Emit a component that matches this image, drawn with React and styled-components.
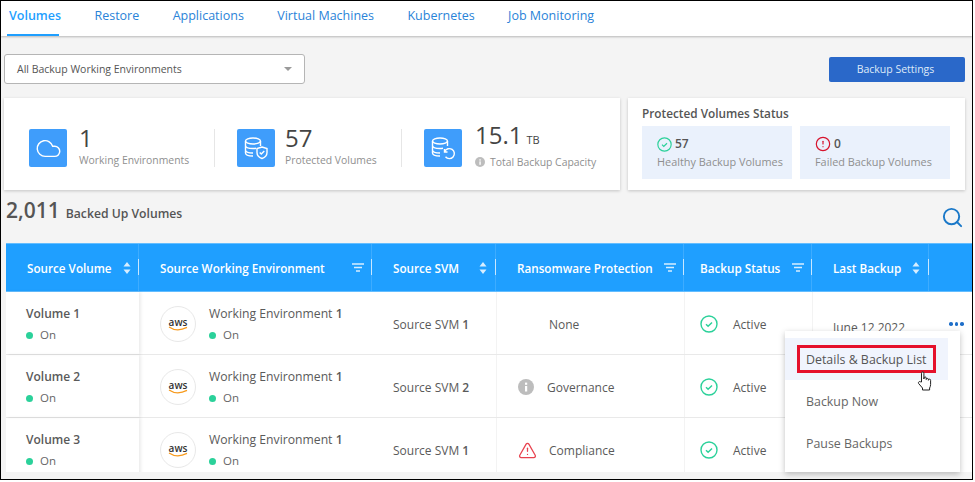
import React from "react";
import styled, { createGlobalStyle } from "styled-components";
import { Cloud, Search, CircleAlert, TriangleAlert } from "lucide-react";

const GlobalStyle = createGlobalStyle`
  html, body { margin: 0; padding: 0; background: #fff; }
  * { box-sizing: border-box; }
`;

const blue = "#1f9fff";
const text = "#5a5a5a";
const muted = "#8f8f8f";
const green = "#2bd19a";

const Frame = styled.div`
  position: relative;
  width: 973px;
  height: 480px;
  border: 1px solid #000;
  overflow: hidden;
  background: #f4f4f4;
  font-family: "Open Sans", "Liberation Sans", sans-serif;
  color: ${text};
`;

const TabBar = styled.nav`
  display: flex;
  height: 35px;
  padding-left: 8px;
  gap: 33.4px;
  background: #fff;
  box-shadow: 0 1px 2px rgba(0, 0, 0, 0.25);
`;

const Tab = styled.a`
  position: relative;
  height: 35px;
  padding-top: 6px;
  font-size: 12.5px;
  line-height: 17px;
  color: ${(p) => (p.$active ? blue : "#2a83d8")};
  font-weight: ${(p) => (p.$active ? 600 : 400)};

  &::after {
    content: "";
    display: ${(p) => (p.$active ? "block" : "none")};
    position: absolute;
    left: -2px;
    right: 2px;
    bottom: 0;
    height: 2px;
    background: ${blue};
  }
`;

const Toolbar = styled.div`
  display: flex;
  justify-content: space-between;
  align-items: center;
  padding: 18px 7px 0 3px;
`;

const Select = styled.div`
  display: flex;
  align-items: center;
  justify-content: space-between;
  width: 301px;
  height: 30px;
  padding: 0 12px;
  background: #fff;
  border: 1px solid #b5b5b5;
  border-radius: 3px;
  font-size: 10.5px;
  color: #555;
`;

const Caret = styled.span`
  width: 0;
  height: 0;
  border: 4px solid transparent;
  border-top: 4px solid #9a9a9a;
  border-bottom: 0;
`;

const SettingsButton = styled.button`
  width: 136px;
  height: 25px;
  padding: 0 3px 0 0;
  border: 0;
  border-radius: 2px;
  background: #2a68c9;
  color: #dfeaf8;
  font: 400 10.5px "Open Sans", sans-serif;
`;

const SummaryRow = styled.div`
  display: flex;
  gap: 8px;
  padding: 14px 7px 0 3px;
`;

const Card = styled.section`
  background: #fff;
  height: 92px;
  box-shadow: 0 1px 3px rgba(0, 0, 0, 0.2);
`;

const TotalsCard = styled(Card)`
  display: flex;
  align-items: center;
  width: 616px;
  padding: 8px 0 0 25px;
`;

const Stat = styled.div`
  display: flex;
  align-items: center;
  width: ${(p) => p.$width}px;
  gap: ${(p) => p.$gap}px;
`;

const IconTile = styled.div`
  display: flex;
  align-items: center;
  justify-content: center;
  width: 38px;
  height: 38px;
  border-radius: 2px;
  background: #3f9dfb;
  color: #fff;
`;

const StatText = styled.div`
  display: flex;
  flex-direction: column;
`;

const StatValue = styled.div`
  font-size: 24px;
  line-height: 26px;
  color: #444;
  margin-top: -5px;

  small {
    font-size: 11px;
    margin-left: 4px;
  }
`;

const StatLabel = styled.div`
  display: flex;
  align-items: center;
  gap: 5px;
  font-size: 10.4px;
  line-height: 14px;
  margin-top: 2px;
  color: ${muted};
  white-space: nowrap;
`;

const Divider = styled.div`
  width: 1px;
  height: 38px;
  margin-right: 22px;
  background: #e6e6e6;
`;

const StatusCard = styled(Card)`
  width: 337px;
  padding: 8px 15px 0 14px;
`;

const StatusTitle = styled.h3`
  margin: 0 0 5px;
  font-size: 11.8px;
  line-height: 15px;
  font-weight: 600;
  color: #555;
  white-space: nowrap;
`;

const StatusTiles = styled.div`
  display: flex;
  gap: 8px;
`;

const StatusTile = styled.div`
  width: 150px;
  height: 53px;
  padding: 10px 0 0 15px;
  background: #eaf1fc;
`;

const StatusCount = styled.div`
  display: flex;
  align-items: center;
  gap: 3px;
  font-size: 12px;
  line-height: 16px;
  font-weight: 600;
  color: #555;
`;

const StatusLabel = styled.div`
  margin-top: 3px;
  font-size: 10.9px;
  line-height: 14px;
  color: ${muted};
  white-space: nowrap;
`;

const TableHeading = styled.div`
  display: flex;
  justify-content: space-between;
  align-items: center;
  height: 44px;
  padding: 0 8px 0 5px;
  margin-top: 1px;

  svg {
    margin-top: 9px;
  }
`;

const Count = styled.div`
  display: flex;
  align-items: baseline;
  gap: 6px;
  margin-top: -6px;
  font-size: 12.2px;
  font-weight: 600;
  color: #555;

  strong {
    font-size: 21px;
    font-weight: 600;
    color: #555;
  }
`;

const Table = styled.div`
  margin: 8px 0 0 5px;
  height: 229px;
  overflow: hidden;
  background: #fff;
`;

const columns = "133px 233px 124px 188px 128px 117px 44px";

const HeaderRow = styled.div`
  display: grid;
  grid-template-columns: ${columns};
  height: 49px;
  background: ${blue};
  border-top: 1px solid #63bdff;
  border-bottom: 1px solid #63bdff;
`;

const HeaderCell = styled.div`
  display: flex;
  align-items: center;
  justify-content: space-between;
  padding: 0 ${(p) => p.$pad ?? 6}px 0 ${(p) => p.$left ?? 20}px;
  font-size: 11.7px;
  font-weight: 600;
  color: #fff;
  white-space: nowrap;
  position: relative;
  border-right: 1px solid rgba(255, 255, 255, 0.14);

  &::after {
    content: "";
    position: absolute;
    right: -1px;
    top: 15px;
    height: 16px;
    width: 1px;
    background: #c9e7ff;
  }
`;

const Row = styled.div`
  display: grid;
  grid-template-columns: ${columns};
  height: 63px;
  border-bottom: 1px solid #e9e9e9;
`;

const VolumeCell = styled.div`
  padding: 12px 0 0 20px;
  box-shadow: 2px 0 3px rgba(0, 0, 0, 0.08);
`;

const CellTitle = styled.div`
  line-height: 19px;
  white-space: nowrap;
  font-weight: ${(p) => (p.$bold ? 600 : 400)};
  font-size: ${(p) => (p.$bold ? 12 : 12.2)}px;

  b {
    font-weight: 600;
  }
`;

const Power = styled.div`
  display: flex;
  align-items: center;
  gap: 7px;
  margin-top: 3px;
  line-height: 18px;
  font-size: 11.5px;
  color: #666;

  &::before {
    content: "";
    width: 7px;
    height: 7px;
    border-radius: 50%;
    background: ${green};
  }
`;

const EnvCell = styled.div`
  display: flex;
  gap: 13px;
  padding: 12px 0 0 21px;
`;

const AwsBadge = styled.div`
  display: flex;
  flex-direction: column;
  align-items: center;
  justify-content: center;
  width: 36px;
  height: 36px;
  margin-top: 2px;
  border-radius: 50%;
  border: 1px solid #e8e8e8;
  color: #333;
  font-size: 10px;
  font-weight: 600;
  line-height: 10px;

  svg {
    margin-top: -1px;
  }
`;

const TextCell = styled.div`
  display: flex;
  align-items: center;
  gap: ${(p) => p.$gap ?? 10}px;
  padding: ${(p) => p.$top ?? 2}px 0 0 ${(p) => p.$left ?? 20}px;
  font-size: 12px;
  border-left: ${(p) => (p.$rule ? "1px solid #f3f3f3" : "0")};
  white-space: nowrap;

  b {
    font-weight: 600;
  }
`;

const Dots = styled.div`
  display: flex;
  gap: 2px;
  padding: 30px 0 0 20px;

  i {
    width: 3.5px;
    height: 3.5px;
    border-radius: 50%;
    background: #1f6fc9;
  }
`;

const Menu = styled.div`
  position: absolute;
  left: 784px;
  top: 330px;
  width: 175px;
  height: 141px;
  padding-top: 7px;
  background: #fff;
  box-shadow: 0 2px 6px rgba(0, 0, 0, 0.25);
`;

const MenuItem = styled.div`
  display: flex;
  align-items: center;
  width: 163px;
  height: 42px;
  padding-left: 21px;
  font-size: 12.4px;
  color: #666;
  background: ${(p) => (p.$hover ? "#f0f4fd" : "transparent")};
`;

const Callout = styled.span`
  display: flex;
  align-items: center;
  height: 28px;
  margin-left: -9px;
  padding: 0 6px;
  border: 3px solid #e5112b;
  color: #555;
  white-space: nowrap;
`;

const HandCursor = styled.svg`
  position: absolute;
  left: 132px;
  top: 40px;
`;

const Cylinder = () => (
  <>
    <ellipse cx="10" cy="5" rx="7.5" ry="3" />
    <path d="M2.5 5v12c0 1.7 3.3 3 7.5 3M17.5 5v5M2.5 9.5c0 1.7 3.3 3 7.5 3 1 0 2-.1 3-.3M2.5 14c0 1.7 3.3 3 7.5 3" />
  </>
);

const ShieldDb = () => (
  <svg width="28" height="26" viewBox="0 0 28 24" fill="none" stroke="#fff" strokeWidth="1.4">
    <g transform="translate(1 0)">
      <Cylinder />
    </g>
    <path d="M20 11l5 1.5v4c0 3-2.2 5-5 6-2.8-1-5-3-5-6v-4z" fill="#3f9dfb" />
    <path d="M17.7 16.5l1.6 1.6 3-3" />
  </svg>
);

const RestoreDb = () => (
  <svg width="28" height="26" viewBox="0 0 28 24" fill="none" stroke="#fff" strokeWidth="1.4">
    <g transform="translate(1 0)">
      <Cylinder />
    </g>
    <path d="M16.5 20.8a5 5 0 1 0-.7-5.3M15.5 13v3h3" fill="#3f9dfb" />
  </svg>
);

const CheckCircle = ({ size = 18 }) => (
  <svg width={size} height={size} viewBox="0 0 18 18" fill="none" stroke={green} strokeWidth="1.4">
    <circle cx="9" cy="9" r="8" />
    <path d="M6 9.2l2.1 2 3.9-3.7" strokeWidth="1.5" />
  </svg>
);

const InfoDot = ({ size = 10 }) => (
  <svg width={size} height={size} viewBox="0 0 16 16">
    <circle cx="8" cy="8" r="8" fill="#bdbdbd" />
    <rect x="7" y="7" width="2.2" height="5.5" fill="#fff" />
    <rect x="7" y="3.6" width="2.2" height="2.2" fill="#fff" />
  </svg>
);

const SortIcon = () => (
  <svg width="8" height="14" viewBox="0 0 8 14" fill="#d7eeff">
    <path d="M4 1l3.5 4.5h-7zM4 13L.5 8.5h7z" />
  </svg>
);

const FilterIcon = () => (
  <svg width="12" height="9" viewBox="0 0 12 9" stroke="#d7eeff" strokeWidth="1.7">
    <path d="M0 1h12M2 4.5h8M4 8h4" />
  </svg>
);

const AwsLogo = () => (
  <AwsBadge>
    aws
    <svg width="20" height="5" viewBox="0 0 20 5" fill="none" stroke="#f79a1c" strokeWidth="1.2">
      <path d="M1 1c5 3.4 12 3.4 18 .4" />
    </svg>
  </AwsBadge>
);

const headers = [
  { label: "Source Volume", icon: <SortIcon />, pad: 7, left: 21 },
  { label: "Source Working Environment", icon: <FilterIcon />, pad: 7, left: 21 },
  { label: "Source SVM", icon: <SortIcon />, pad: 8, left: 21 },
  { label: "Ransomware Protection", icon: <FilterIcon />, pad: 7, left: 21 },
  { label: "Backup Status", icon: <FilterIcon />, pad: 7, left: 16 },
  { label: "Last Backup", icon: <SortIcon />, pad: 8, left: 21 },
];

const protection = [
  { label: "None", left: 52 },
  { label: "Governance", left: 21, gap: 13, icon: <InfoDot size={16} /> },
  { label: "Compliance", left: 21, gap: 12, icon: <TriangleAlert size={19} color="#e8424f" strokeWidth={1.6} /> },
];

const rows = [
  { name: "Volume 1", svm: "1", date: "June 12 2022" },
  { name: "Volume 2", svm: "2", date: "" },
  { name: "Volume 3", svm: "1", date: "" },
];

export default function App() {
  return (
    <Frame>
      <GlobalStyle />
      <TabBar>
        <Tab $active>Volumes</Tab>
        <Tab>Restore</Tab>
        <Tab>Applications</Tab>
        <Tab>Virtual Machines</Tab>
        <Tab>Kubernetes</Tab>
        <Tab>Job Monitoring</Tab>
      </TabBar>

      <Toolbar>
        <Select>
          All Backup Working Environments
          <Caret />
        </Select>
        <SettingsButton>Backup Settings</SettingsButton>
      </Toolbar>

      <SummaryRow>
        <TotalsCard>
          <Stat $width={185} $gap={12}>
            <IconTile><Cloud size={27} strokeWidth={1.3} /></IconTile>
            <StatText>
              <StatValue>1</StatValue>
              <StatLabel>Working Environments</StatLabel>
            </StatText>
          </Stat>
          <Divider />
          <Stat $width={164} $gap={10}>
            <IconTile><ShieldDb /></IconTile>
            <StatText>
              <StatValue>57</StatValue>
              <StatLabel>Protected Volumes</StatLabel>
            </StatText>
          </Stat>
          <Divider />
          <Stat $width={180} $gap={13}>
            <IconTile><RestoreDb /></IconTile>
            <StatText>
              <StatValue>15.1<small>TB</small></StatValue>
              <StatLabel><InfoDot />Total Backup Capacity</StatLabel>
            </StatText>
          </Stat>
        </TotalsCard>

        <StatusCard>
          <StatusTitle>Protected Volumes Status</StatusTitle>
          <StatusTiles>
            <StatusTile>
              <StatusCount><CheckCircle size={15} />57</StatusCount>
              <StatusLabel>Healthy Backup Volumes</StatusLabel>
            </StatusTile>
            <StatusTile>
              <StatusCount><CircleAlert size={16} color="#d7132d" strokeWidth={1.8} />0</StatusCount>
              <StatusLabel>Failed Backup Volumes</StatusLabel>
            </StatusTile>
          </StatusTiles>
        </StatusCard>
      </SummaryRow>

      <TableHeading>
        <Count><strong>2,011</strong>Backed Up Volumes</Count>
        <Search size={23} color="#1a78c8" strokeWidth={2} />
      </TableHeading>

      <Table>
        <HeaderRow>
          {headers.map((h) => (
            <HeaderCell key={h.label} $pad={h.pad} $left={h.left}>
              {h.label}
              {h.icon}
            </HeaderCell>
          ))}
          <div />
        </HeaderRow>
        {rows.map((r, i) => (
          <Row key={r.name}>
            <VolumeCell>
              <CellTitle $bold>{r.name}</CellTitle>
              <Power>On</Power>
            </VolumeCell>
            <EnvCell>
              <AwsLogo />
              <div>
                <CellTitle>Working Environment <b>1</b></CellTitle>
                <Power>On</Power>
              </div>
            </EnvCell>
            <TextCell $left={21}><span>Source SVM <b>{r.svm}</b></span></TextCell>
            <TextCell $left={protection[i].left} $gap={protection[i].gap} $rule>
              {protection[i].icon}
              {protection[i].label}
            </TextCell>
            <TextCell $left={15} $gap={15} $rule><CheckCircle />Active</TextCell>
            <TextCell $top={8} $rule>{r.date}</TextCell>
            {i === 0 ? <Dots><i /><i /><i /></Dots> : <div />}
          </Row>
        ))}
      </Table>

      <Menu>
        <MenuItem $hover><Callout>Details &amp; Backup List</Callout></MenuItem>
        <MenuItem>Backup Now</MenuItem>
        <MenuItem>Pause Backups</MenuItem>
        <HandCursor width="16" height="20" viewBox="0 0 16 20" fill="#fff" stroke="#222" strokeWidth="1">
          <path d="M4.5 11V2.2a1.2 1.2 0 0 1 2.4 0V8l.1-1a1.1 1.1 0 0 1 2.2.1V8.500a1.1 1.1 0 0 1 2.2 0v.8a1.1 1.1 0 0 1 2.2 0v4.2c0 1.5-.5 2.5-1 3.5v2H5.5v-2L1.6 12.5a1.3 1.3 0 0 1 1.9-1.7z" />
        </HandCursor>
      </Menu>
    </Frame>
  );
}
